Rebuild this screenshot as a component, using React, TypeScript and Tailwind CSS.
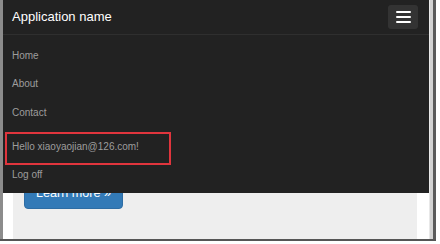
const navLinks = ["Home", "About", "Contact"];

const NavItem = ({ label }: { label: string }) => (
  <li className="h-[28.5px] flex items-center px-[9px] text-[10px] text-[#9d9d9d]">
    {label}
  </li>
);

const App = () => {
  return (
    <div className="w-[440px] h-[244px] bg-white overflow-hidden font-['Liberation_Sans',Arial,sans-serif]">
      <div className="flex h-[239px]">
        {/* window edge */}
        <div className="w-[3px] bg-[#8c8c8c]" />

        {/* browser viewport */}
        <div className="relative w-[426px] bg-white overflow-hidden">
          {/* page content under the fixed navbar */}
          <div className="px-[10px] pr-[12px]">
            <div className="bg-[#eeeeee] h-[260px] pt-[177px] px-[11px]">
              <a className="flex items-center justify-center w-[99px] h-[32px] rounded-[4px] bg-[#337ab7] border border-[#2e6da4] text-white text-[12.6px]">
                Learn more »
              </a>
            </div>
          </div>

          {/* collapsed navbar, expanded */}
          <nav className="absolute top-0 left-0 right-0 bg-[#222222]">
            <div className="h-[35px] flex items-center justify-between pl-[9px] pr-[11px] border-b border-[#2f2f2f]">
              <span className="text-[13px] text-white">Application name</span>
              <button className="w-[30px] h-[24px] rounded-[3px] bg-[#333333] flex flex-col items-center justify-center gap-[3px]">
                <span className="block w-[15px] h-[2px] bg-white rounded-[1px]" />
                <span className="block w-[15px] h-[2px] bg-white rounded-[1px]" />
                <span className="block w-[15px] h-[2px] bg-white rounded-[1px]" />
              </button>
            </div>
            <ul className="pt-[6px] pb-[5px]">
              {navLinks.map((l) => (
                <NavItem key={l} label={l} />
              ))}
            </ul>
            <ul className="relative pt-[0.5px] pb-[4px]">
              <NavItem label="Hello xiaoyaojian@126.com!" />
              <NavItem label="Log off" />
              {/* annotation box */}
              <div className="absolute left-[2px] top-[0.5px] w-[166px] h-[33px] border-2 border-[#e0353d]" />
            </ul>
          </nav>
        </div>

        {/* scrollbar + shadow */}
        <div className="w-[1px] bg-[#e8e8e8]" />
        <div className="w-[3px] bg-[#d2d2d2]" />
        <div className="w-[3px] bg-[#5a5a5a]" />
        <div className="flex-1 bg-white" />
      </div>
      <div className="w-[436px] h-[2px] bg-[#555555]" />
    </div>
  );
};

export default App;
